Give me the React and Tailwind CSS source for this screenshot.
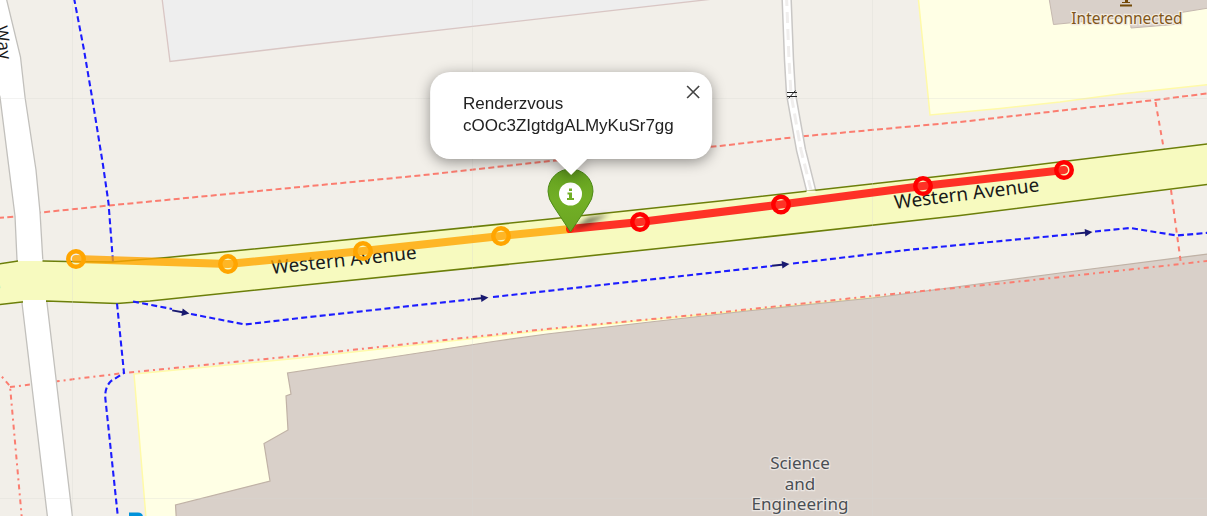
const orangeTrack = [[76, 259], [228, 264], [363, 251], [501, 236]];
const redTrack = [[640, 222], [781, 204.5], [923, 186], [1064, 170]];
const arrows = [[184, 312.5, 10], [483, 298, -6], [784, 264.5, -6], [1087, 232.5, -5]];
const avenue =
  "M-5 264.5 18 261 43 261 67 261.500 112 262 167 257.500 300 244.500 550 219 720 201 960 174 1215 143 1215 183.500 960 215.500 720 242 550 260 300 285.500 150 301 117 303.500 46 301 22 302 -5 305Z";

function MapCanvas() {
  return (
    <svg
      className="absolute inset-0 size-full font-['Noto_Sans',sans-serif]"
      viewBox="0 0 1207 516"
      preserveAspectRatio="xMidYMid slice"
      role="img"
      aria-label="Map of Western Avenue"
    >
      <defs>
        <filter id="soft" x="-50%" y="-50%" width="200%" height="200%">
          <feGaussianBlur stdDeviation="2.5" />
        </filter>
        <linearGradient id="pin" x1="0" y1="0" x2="0" y2="1">
          <stop offset="0" stopColor="#63a01f" />
          <stop offset="0.5" stopColor="#72af26" />
          <stop offset="1" stopColor="#6ba622" />
        </linearGradient>
      </defs>
      <rect width="1207" height="516" fill="#f2efe9" />

      <path d="M162 -2 170 61.500 300 46 722 -2Z" fill="#eeeeee" stroke="#d9c6c4" strokeWidth="1.300" />
      <path d="M918 -5 930 115 1000 108.500 1060 102 1120 94 1215 84 1215 -5Z" fill="#ffffe5" stroke="#fffaa8" strokeWidth="1.500" />
      <path d="M1049 -2 1053.500 24.500 1130 17 1131 28 1180 24 1178 13 1215 7 1215 -2Z" fill="#d9d0c9" stroke="#c5b8af" />
      <path d="M134 374 300 358 547 330 760 309 877 297 960 292 1215 320 1215 530 147 530Z" fill="#ffffe5" stroke="#fffaa8" strokeWidth="1.500" />
      <path
        d="M177 530 175.500 505 270 481 264 443.500 288 430 286 396 291 394 287.500 373 412 354 490 342 547 334 650 322 747 311 877 297.500 993 282 1060 273 1215 253 1215 530Z"
        fill="#d9d0c9"
        stroke="#c0b2a6"
        strokeWidth="1.200"
      />

      <g fill="none" stroke="#fb7d70" strokeWidth="2">
        <path d="M-2 218 15 216.500 41 212.500 109 205.500 300 187 420 175.500 550 161 720 146 800 136.500 960 122 1155 100 1215 92.500" strokeDasharray="6 3.300" />
        <path d="M1155.500 102 1164 150M1171 190 1175 220 1181 264" strokeDasharray="5 4.500" />
        <path d="M-4 370 10 386 22 520M10 387 124 373 300 355.500 547 329 700 314.500 877 295.500 1010 282.500 1181 264 1215 260" strokeDasharray="5 4 2 4" />
      </g>

      <path d="M-20 -5 5.500 -5 20.500 57 25 97 36 170 40 212 43 263 47 303 74 530 49 530 22 303 17 260 15 216 0 97 -20 40Z" fill="#ffffff" stroke="#c2c0bc" strokeWidth="1.300" />

      <g fill="none">
        <path d="M786.500 -5 789 60 791 94 801 150 812 194" stroke="#c9c7c5" strokeWidth="10.500" />
        <path d="M786.500 -5 789 60 791 94 801 150 812 194" stroke="#ffffff" strokeWidth="7.500" />
        <path d="M786.500 -5 789 60 791 94 801 150 812 194" stroke="#f0eeed" strokeWidth="3" strokeDasharray="11 6" />
        <path d="M787 92.500H797M787 96.500H797" stroke="#222222" strokeWidth="1.200" />
        <path d="M795.500 90.500 788.500 98.500" stroke="#222222" strokeWidth="1" />
      </g>

      <path d={avenue} fill="#f7fabf" stroke="#6c7f0a" strokeWidth="1.600" />
      <path d="M18 261H42.500V264H18ZM23 297H46V300H23Z" fill="#f7fabf" />
      <path d="M18 259H42.500V261H18ZM23 300H46V304H23Z" fill="#ffffff" />
      <path d="M806.500 190.500h9v2.500h-9z" fill="#fbfbe0" />

      <g fill="none" stroke="#1c1cff" strokeWidth="2.100" strokeDasharray="6 3.300">
        <path d="M74 -2 84 50 92 97 103 165 108.500 203 113 262" />
        <path d="M117 303.500 124 373 111 381 Q104 388 105.500 400L118 518" />
        <path d="M133 301.500 172 309M191 314 245 324.500 300 318 470 299.500M493 297 772 266M793 263.500 907 250 1074 234M1095 231.500 1130 228 1177 235.500 1212 232.500" />
      </g>
      {arrows.map(([x, y, angle]) => (
        <g key={x} transform={`translate(${x} ${y}) rotate(${angle})`}>
          <path d="M-12 0H0" stroke="#191970" strokeWidth="1.800" />
          <path d="M-2 -3.800 5.500 0-2 3.800Z" fill="#191970" />
        </g>
      ))}

      <g fill="none" stroke="#d8d8d4" strokeOpacity="0.300">
        <path d="M0 98.500H1207M0 498.500H1207M72.500 0V516M472.500 0V516M872.500 0V516" />
      </g>

      <g fill="#1a1a1a" fontSize="19" stroke="#f7fabf" strokeWidth="2" paintOrder="stroke">
        <text transform="translate(272 274) rotate(-6)">Western Avenue</text>
        <text transform="translate(895 209) rotate(-7)">Western Avenue</text>
        <text transform="translate(0 60) rotate(82)" textAnchor="end" fontSize="17" stroke="#ffffff">
          <tspan dy="9">Academic</tspan>
          <tspan dy="-9"> Way</tspan>
        </text>
        <text x="-9" y="292" fontSize="17">e</text>
      </g>
      <g textAnchor="middle" fontSize="17" paintOrder="stroke" strokeWidth="2.500">
        <g fill="#4a4f54" stroke="#ebe6e2">
          <text x="800" y="469">Science</text>
          <text x="800" y="490">and</text>
          <text x="800" y="510">Engineering</text>
        </g>
        <text x="1127" y="24" fontSize="15.500" fill="#80561a" stroke="#f2ebe0">Interconnected</text>
      </g>
      <path d="M1125 -2h3v4h2v1h-8v-1h3zM1120 4.500h12v2h-12z" fill="#734a08" />
      <path d="M129 512.500h9q5 0 5 5v3h-14z" fill="#0092da" />

      <path d="M76 259 228 264 363 251 501 236 570 229" fill="none" stroke="#ffa500" strokeOpacity="0.800" strokeWidth="8" strokeLinecap="round" strokeLinejoin="round" />
      <path d="M570 229 640 222 781 204.500 923 186 1064 170" fill="none" stroke="#ff0000" strokeOpacity="0.800" strokeWidth="8" strokeLinecap="round" strokeLinejoin="round" />
      {orangeTrack.map(([x, y]) => (
        <circle key={x} cx={x} cy={y} r="7.750" fill="none" stroke="#ffa500" strokeWidth="4.500" />
      ))}
      {redTrack.map(([x, y]) => (
        <circle key={x} cx={x} cy={y} r="7.750" fill="none" stroke="#ff0000" strokeWidth="4.500" />
      ))}

      <path d="M572 230 588 218 610 214 590 224Z" fill="#000000" fillOpacity="0.550" filter="url(#soft)" />
      <path d="M570.500 232 554 207Q548 199 548 191.500A22.500 22.500 0 0 1 593 191.500Q593 199 587 207Z" fill="url(#pin)" stroke="#4d8a17" />
      <circle cx="570.500" cy="194" r="11.500" fill="#ffffff" />
      <path d="M569 188.500h3v2.500h-3zM567.500 192.500h4.500v5.500h2v2h-7v-2h2v-3.500h-1.500z" fill="#72af26" />
    </svg>
  );
}

function Popup() {
  return (
    <section
      aria-label="Marker details"
      className="absolute top-[72px] left-[47.3%] -translate-x-1/2 font-['Liberation_Sans',Arial,sans-serif] drop-shadow-[0_3px_7px_rgba(0,0,0,0.4)]"
    >
      <div className="relative rounded-[20px] bg-white pt-[21px] pr-[38px] pb-[22px] pl-[33px] text-[17px] leading-[22px] text-[#222222]">
        <p>
          Renderzvous
          <br />
          cOOc3ZIgtdgALMyKuSr7gg
        </p>
        <button type="button" aria-label="Close popup" className="absolute top-[11px] right-[10px] p-px text-[#444444]">
          <svg className="size-4" viewBox="0 0 16 16" fill="none" stroke="currentColor" strokeWidth="1.700">
            <path d="M2 2 14 14M14 2 2 14" />
          </svg>
        </button>
      </div>
      <svg className="mx-auto block h-4 w-8" viewBox="0 0 32 16" fill="#ffffff" aria-hidden="true">
        <path d="M0 0H32L16 16Z" />
      </svg>
    </section>
  );
}

export default function App() {
  return (
    <main className="relative h-screen w-full overflow-hidden bg-[#f2efe9]">
      <MapCanvas />
      <Popup />
    </main>
  );
}
